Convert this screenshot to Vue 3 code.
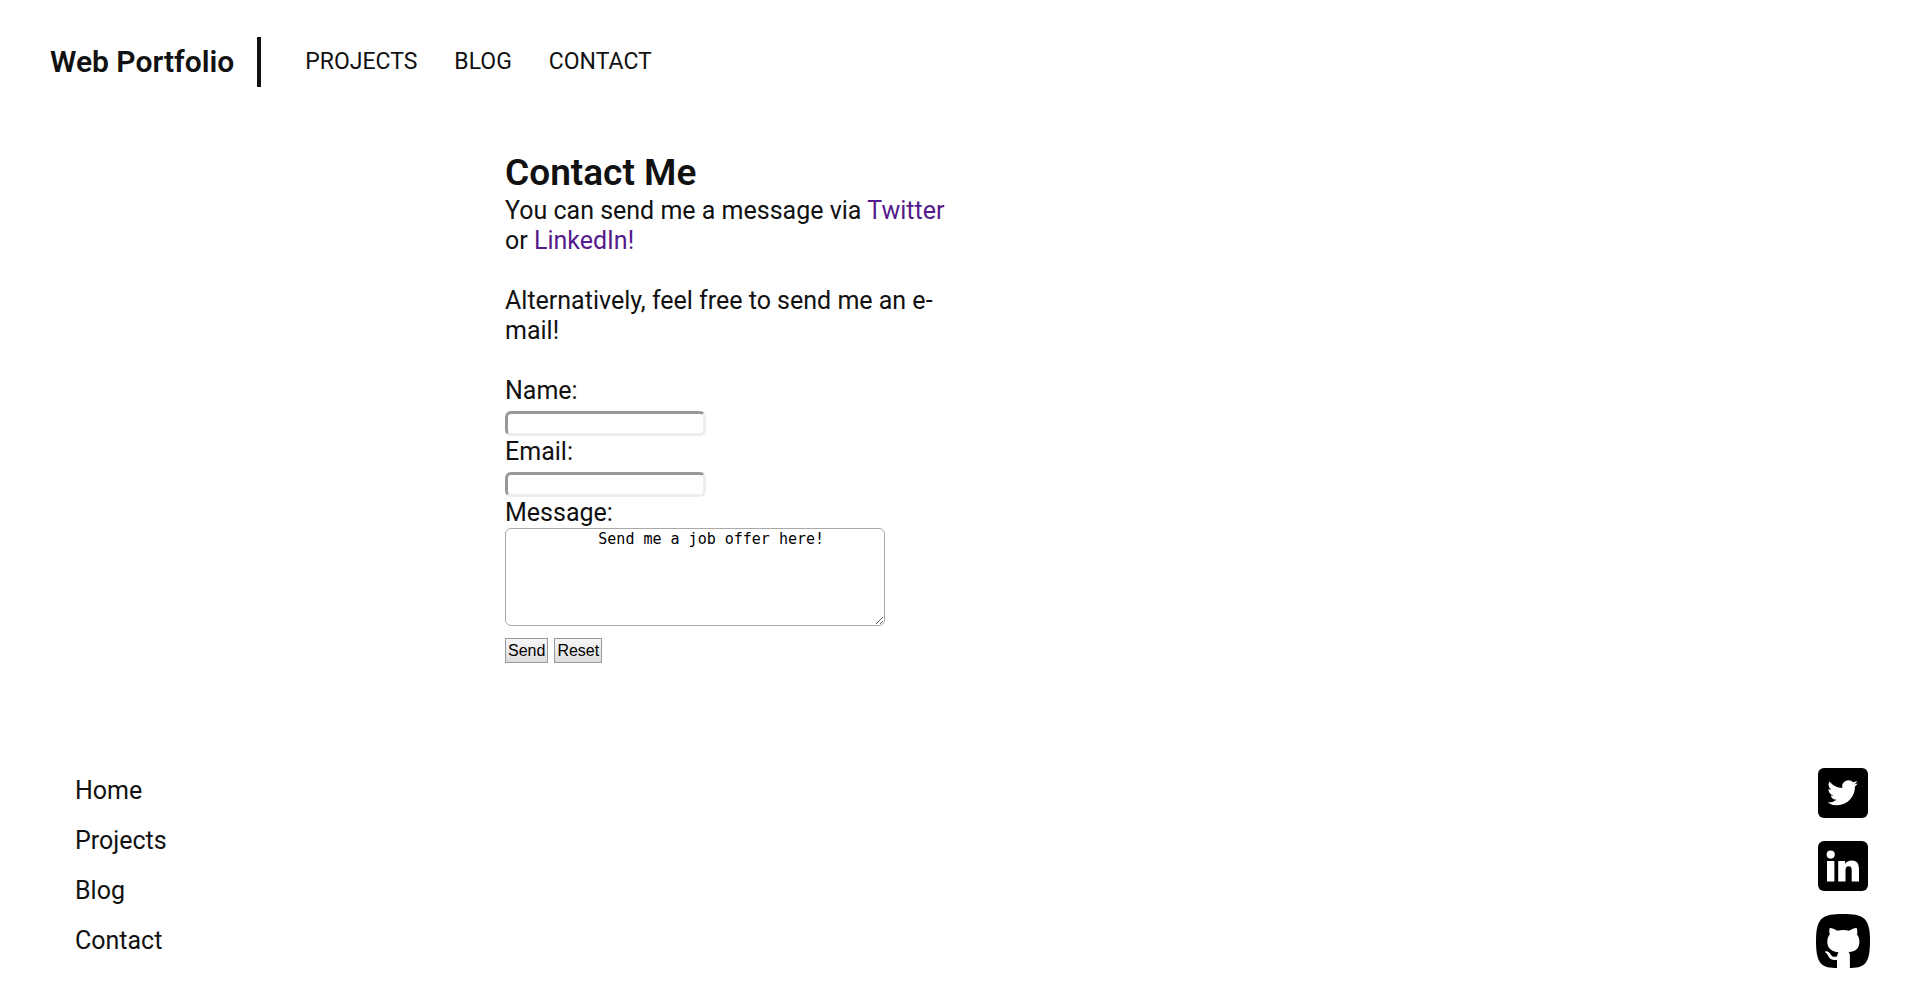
<script setup>
import { ref } from 'vue'

const defaultMessage = '          Send me a job offer here!'
const name = ref('')
const email = ref('')
const message = ref(defaultMessage)

function reset() {
  name.value = ''
  email.value = ''
  message.value = defaultMessage
}
</script>

<template>
  <div class="page">
    <header class="top">
      <a class="brand" href="#">Web Portfolio</a>
      <nav class="menu">
        <a href="#projects">PROJECTS</a>
        <a href="#blog">BLOG</a>
        <a href="#contact">CONTACT</a>
      </nav>
    </header>

    <main class="contact">
      <h1>Contact Me</h1>
      <p>You can send me a message via <a href="#twitter">Twitter</a> or <a href="#linkedin">LinkedIn!</a></p>
      <p>Alternatively, feel free to send me an e-mail!</p>
      <form @submit.prevent @reset.prevent="reset">
        <label for="name">Name:</label>
        <input id="name" v-model="name" type="text" />
        <label for="email">Email:</label>
        <input id="email" v-model="email" type="text" />
        <label for="message">Message:</label>
        <textarea id="message" v-model="message" spellcheck="false"></textarea>
        <div class="actions">
          <button type="submit">Send</button>
          <button type="reset">Reset</button>
        </div>
      </form>
    </main>

    <footer class="bottom">
      <nav class="links">
        <a href="#">Home</a>
        <a href="#projects">Projects</a>
        <a href="#blog">Blog</a>
        <a href="#contact">Contact</a>
      </nav>
      <div class="social">
        <a href="#twitter" aria-label="Twitter">
          <svg width="50" height="50" viewBox="0 0 50 50">
            <rect width="50" height="50" rx="6" />
            <path fill="#fff" transform="translate(9.3 9.4) scale(1.28)" d="M23.95 4.57a10 10 0 0 1-2.82.77 4.96 4.96 0 0 0 2.16-2.72c-.95.55-2 .95-3.13 1.18a4.92 4.92 0 0 0-8.38 4.48C7.69 8.1 4.07 6.13 1.64 3.16a4.92 4.92 0 0 0 1.52 6.57 4.9 4.9 0 0 1-2.23-.61v.06c0 2.38 1.7 4.37 3.95 4.83a5 5 0 0 1-2.21.08 4.94 4.94 0 0 0 4.6 3.42A9.87 9.87 0 0 1 0 19.54a13.99 13.99 0 0 0 7.56 2.21c9.05 0 14-7.5 14-13.98 0-.21 0-.42-.02-.63a9.94 9.94 0 0 0 2.41-2.57z" />
          </svg>
        </a>
        <a href="#linkedin" aria-label="LinkedIn">
          <svg width="50" height="50" viewBox="0 0 50 50">
            <rect width="50" height="50" rx="6" />
            <g fill="#fff">
              <circle cx="12.7" cy="13.6" r="4.1" />
              <rect x="9" y="20" width="7.4" height="20.5" />
              <path d="M20.2 20h6.9v2.9c1.2-2.1 3.6-3.5 6.7-3.5 5.6 0 7.2 3.7 7.2 9.2v11.9h-7.3V30c0-2.7-.5-4.7-3-4.7-2.600 0-3.200 2-3.200 4.700v10.500h-7.300z" />
            </g>
          </svg>
        </a>
        <a href="#github" aria-label="GitHub">
          <svg width="54" height="54" viewBox="0 0 54 54">
            <path d="M27 0C47 0 54 3 54 27S48 54 32.500 54H21.500C6 54 0 51 0 27S7 0 27 0z" />
            <path fill="#fff" d="M13.700 14.200c.5-.8 4.800.7 7.600 2.500 3.600-.8 8.200-.8 11.800 0 2.800-1.800 7-3.300 7.600-2.500.9 2 .8 4.600.3 6.200 1.700 2 2.400 4.300 2.400 7 0 7.300-4 9.900-10.700 10.700 1 1.200 1.200 2.500 1.200 4.500V54H21v-8.100c-4.600.8-7.100-.6-8.600-3.600-.8-1.700-1.600-2.900-3-3.700-.9-.8-.3-1.500 1-1.400 2.600.2 3.500 2.100 4.600 3.700 1.400 2 3.600 2.200 6.200 1.300.1-1.600.6-3 1.400-4-6.700-.8-11.300-3.400-11.300-10.800 0-2.700.8-5 2.500-7-.6-1.700-.8-4.200-.1-6.200z" />
          </svg>
        </a>
      </div>
    </footer>
  </div>
</template>

<style>
body {
  margin: 0;
  background: #fff;
}
</style>

<style scoped>
.page {
  font-family: Roboto, "Liberation Sans", sans-serif;
  font-size: 25px;
  line-height: 30px;
  color: #111;
}

a {
  color: inherit;
  text-decoration: none;
}

.top {
  display: flex;
  align-items: center;
  padding: 37px 50px 0;
}

.brand {
  padding-right: 23px;
  border-right: 4px solid #111;
  font-size: 30px;
  font-weight: 600;
  line-height: 50px;
}

.menu {
  display: flex;
  gap: 37px;
  padding-left: 44px;
  font-size: 23px;
}

.contact {
  width: 460px;
  margin: 63px 0 0 505px;
}

h1 {
  margin: 0 0 1px;
  font-size: 37px;
  font-weight: 600;
  line-height: 45px;
}

p {
  margin: 0 0 30px;
}

p a {
  color: #551a8b;
}

label {
  display: block;
}

input {
  display: block;
  box-sizing: border-box;
  width: 201px;
  height: 25px;
  margin: 5px 0 1px;
  padding: 0 4px;
  border: 3px solid;
  border-color: #999 #eee #eee #999;
  border-radius: 6px;
  background: #fff;
  font: 16px "Liberation Sans", sans-serif;
}

textarea {
  display: block;
  box-sizing: border-box;
  width: 380px;
  height: 98px;
  margin: 0;
  padding: 1px 2px;
  border: 1px solid #a9a9a9;
  border-radius: 6px;
  background: #fff;
  color: #000;
  font: 15px/18px "DejaVu Sans Mono", monospace;
  resize: both;
}

.actions {
  display: flex;
  gap: 6px;
  margin-top: 12px;
}

button {
  height: 25px;
  padding: 0 2px;
  border: 1px solid #999;
  border-radius: 0;
  background: linear-gradient(#f6f6f6, #ddd);
  color: #000;
  font: 16px "Liberation Sans", sans-serif;
}

.bottom {
  display: flex;
  justify-content: space-between;
  padding: 105px 46px 30px 75px;
}

.links {
  display: flex;
  flex-direction: column;
  gap: 20px;
  padding-top: 8px;
}

.social {
  display: flex;
  flex-direction: column;
  align-items: center;
  gap: 23px;
}

.social svg {
  display: block;
}
</style>
